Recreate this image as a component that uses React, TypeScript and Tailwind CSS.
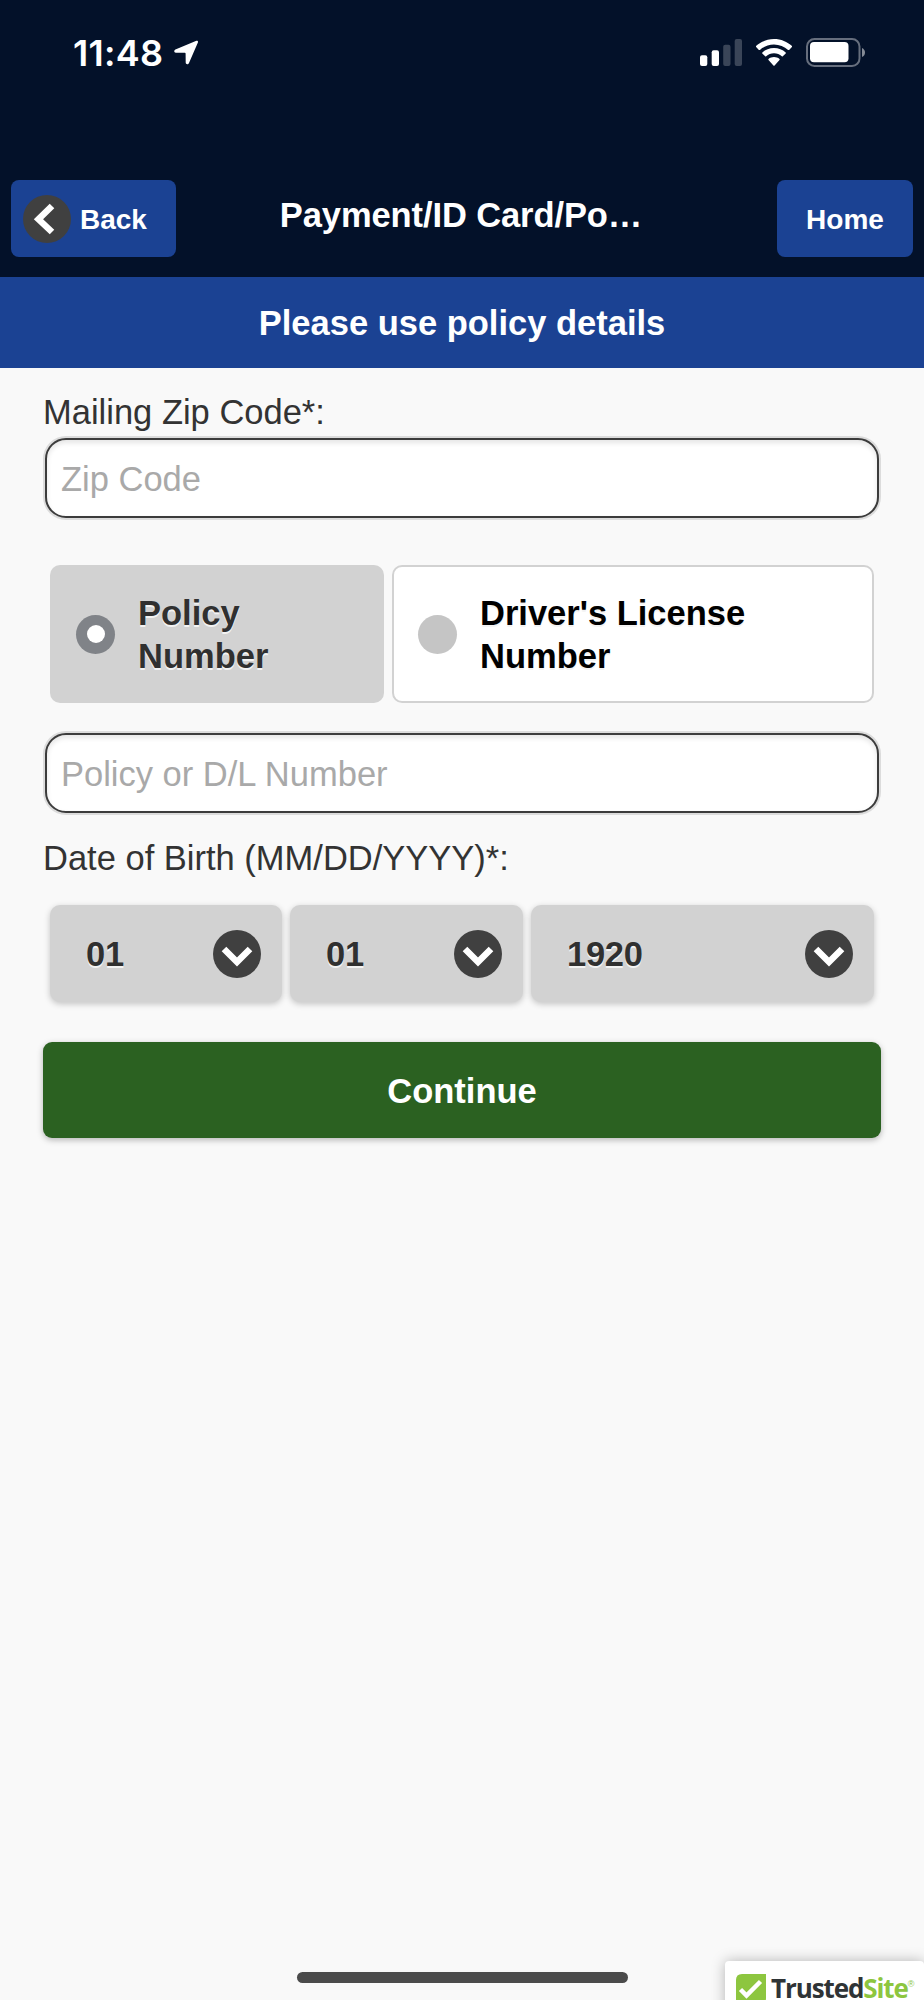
// src/App.tsx
import React from "react";

const birthFields = [
  { id: "month", value: "01", width: "w-[232px]" },
  { id: "day", value: "01", width: "w-[233px]" },
  { id: "year", value: "1920", width: "w-[343px]" },
];

const StatusBar: React.FC = () => (
  <div className="h-[180px] flex items-start justify-between pl-[73px] pr-[58px]">
    <div className="flex items-start pt-[31px]">
      <span className="font-[Inter,sans-serif] font-semibold text-[36px] leading-[44px] tracking-[0.3px] w-[100px] whitespace-nowrap">
        11:48
      </span>
      <svg className="mt-[9px] ml-px" width="25" height="25" viewBox="0 0 25 25" fill="#fff">
        <path d="M22.4.8 1.4 9.6C-.4 10.4 0 12.7 1.8 12.7L10.8 12.8Q11.6 12.8 11.6 13.6L11.7 22.5C11.7 24.5 14.2 24.9 15 23L23.9 2.4C24.4 1.2 23.4.4 22.4.8Z" />
      </svg>
    </div>
    <div className="flex items-start pt-[38px]">
      <svg width="42" height="28" viewBox="0 0 42 28" fill="#fff">
        <rect x="0" y="17.3" width="7.3" height="10.7" rx="2" />
        <rect x="11.7" y="12.3" width="7.3" height="15.7" rx="2" />
        <rect x="23.2" y="6.7" width="7.3" height="21.3" rx="2" opacity=".22" />
        <rect x="34.7" y="1" width="7.3" height="27" rx="2" opacity=".22" />
      </svg>
      <svg className="ml-[14px]" width="36" height="28" viewBox="0 0 36 28" fill="#fff">
        <path d="M18 1C11 1 4.700 3.700 0 8.100Q-.3 8.600.1 9.100L2.900 11.900Q3.400 12.300 3.900 11.900C7.600 8.500 12.600 6.400 18 6.400S28.400 8.500 32.100 11.900Q32.600 12.300 33.100 11.900L35.900 9.100Q36.300 8.600 36 8.100C31.300 3.700 25 1 18 1Z" />
        <path d="M18 10C13.500 10 9.400 11.700 6.300 14.500Q5.900 15 6.300 15.500L9.200 18.300Q9.700 18.700 10.200 18.300C12.300 16.400 15 15.300 18 15.300S23.700 16.400 25.800 18.300Q26.300 18.700 26.800 18.300L29.700 15.500Q30.100 15 29.700 14.500C26.600 11.700 22.500 10 18 10Z" />
        <path d="M18 19C16 19 14 19.700 12.500 20.900Q12 21.400 12.500 21.900L17.400 27.400Q18 28 18.600 27.400L23.500 21.900Q24 21.400 23.500 20.900C22 19.700 20 19 18 19Z" />
      </svg>
      <svg className="ml-[14px]" width="60" height="29" viewBox="0 0 60 29">
        <rect x="1" y="1" width="52.500" height="27" rx="7.500" fill="none" stroke="#666e7d" strokeWidth="2" />
        <rect x="4" y="4" width="38.500" height="20.300" rx="4" fill="#fff" />
        <path d="M56 10C58 11 59 12.500 59 14.500S58 18 56 19Z" fill="#858b96" />
      </svg>
    </div>
  </div>
);

const Chevron: React.FC<{ left?: boolean }> = ({ left }) => (
  <svg className="flex-shrink-0" width="48" height="48" viewBox="0 0 48 48">
    <circle cx="24" cy="24" r="24" fill="#404040" />
    <path
      d={left ? "M29 11 15.500 24.300 29 37" : "M11 19 24 32 37 19"}
      fill="none"
      stroke="#fff"
      strokeWidth="6.500"
    />
  </svg>
);

const TextField: React.FC<{ placeholder: string }> = ({ placeholder }) => (
  <input
    type="text"
    placeholder={placeholder}
    className="block w-[834px] h-[80px] rounded-[21px] border-2 border-[#3c3c3c] bg-white pt-[2px] pl-[14px] text-[34.5px] placeholder:text-[#a9a9a9] placeholder:opacity-100 shadow-[0_0_0_2px_#dcdcdc,inset_0_3px_5px_rgba(0,0,0,0.1)]"
  />
);

const App: React.FC = () => {
  return (
    <div className="w-[924px] h-[2000px] overflow-hidden flex flex-col bg-[#f9f9f9] font-['Liberation_Sans',sans-serif] text-[34.5px] text-[#333]">
      {/* Header */}
      <header className="h-[277px] flex-shrink-0 bg-[#031129] text-white">
        <StatusBar />
        <div className="flex items-start justify-between pl-[11px] pr-[11px]">
          <button className="w-[165px] h-[77px] rounded-lg bg-[#1b4293] flex items-center pl-[12px] text-[28px] font-bold">
            <Chevron left />
            <span className="ml-[9px] mt-[3px]">Back</span>
          </button>
          <h1 className="mt-[15px] mr-[31px] leading-10 font-bold whitespace-nowrap tracking-[-0.1px]">Payment/ID Card/Po…</h1>
          <button className="w-[136px] h-[77px] rounded-lg bg-[#1b4293] pt-[3px] text-[28px] font-bold">
            Home
          </button>
        </div>
      </header>

      <div className="h-[91px] flex-shrink-0 bg-[#1b4293] flex items-center justify-center pt-[2px] font-bold text-white">
        Please use policy details
      </div>

      {/* Policy form */}
      <main className="flex-1 pt-[24px] pl-[43px]">
        <label className="block h-[46px] leading-[40px]">Mailing Zip Code*:</label>
        <div className="pl-[2px]">
          <TextField placeholder="Zip Code" />
        </div>

        <div className="flex gap-[8px] mt-[47px] pl-[7px] font-bold leading-[43px]">
          <div className="w-[334px] h-[138px] rounded-[10px] bg-[#d2d2d2] flex items-center pl-[26px] text-[#303030] [text-shadow:0_2px_0_#f3f3f3]">
            <span className="w-[39px] h-[39px] rounded-full bg-[#808388] flex items-center justify-center">
              <span className="w-[18px] h-[18px] rounded-full bg-white" />
            </span>
            <span className="ml-[23px] pt-[2px] w-[180px]">Policy Number</span>
          </div>
          <div className="w-[482px] h-[138px] rounded-[10px] border-2 border-[#d2d2d2] bg-white flex items-center pl-[24px] text-black [text-shadow:0_2px_0_#f3f3f3]">
            <span className="w-[39px] h-[39px] rounded-full bg-[#c5c5c5]" />
            <span className="ml-[23px] pt-[2px] w-[300px]">Driver's License Number</span>
          </div>
        </div>

        <div className="mt-[30px] pl-[2px]">
          <TextField placeholder="Policy or D/L Number" />
        </div>

        <label className="block mt-[25px] h-[67px] leading-[40px]">Date of Birth (MM/DD/YYYY)*:</label>
        <div className="flex gap-[8px] pl-[7px]">
          {birthFields.map((field) => (
            <div
              key={field.id}
              className={`${field.width} h-[97px] rounded-[10px] bg-[#d2d2d2] flex items-center justify-between pl-[36px] pr-[21px] font-bold text-[#303030] shadow-[0_2px_6px_rgba(0,0,0,0.22)]`}
            >
              <span className="mt-[3px] tracking-[-0.3px] [text-shadow:0_2px_0_#f3f3f3]">{field.value}</span>
              <Chevron />
            </div>
          ))}
        </div>

        <button className="mt-[40px] w-[838px] h-[96px] rounded-[9px] bg-[#2b6121] pt-[4px] font-bold text-white shadow-[0_2px_6px_rgba(0,0,0,0.28)]">
          Continue
        </button>
      </main>

      {/* Home indicator and TrustedSite badge */}
      <footer className="h-[39px] flex-shrink-0 flex justify-between pl-[297px]">
        <div className="mt-[11px] w-[331px] h-[11px] rounded-full bg-[#4b4b4b]" />
        <div className="w-[199px] h-[60px] rounded-[4px] bg-white flex items-start pl-[11px] pt-[13px] shadow-[0_0_14px_rgba(0,0,0,0.28)]">
          <svg width="30" height="30" viewBox="0 0 30 30">
            <path d="M6 0H30V24Q30 30 24 30H0V6Q0 0 6 0Z" fill="#8dc63f" />
            <path d="m4.500 15.500 6 6L24.500 7.500" fill="none" stroke="#fff" strokeWidth="4.500" />
          </svg>
          <span className="ml-[5px] font-['Open_Sans',sans-serif] font-bold text-[26px] leading-[28px] tracking-[-1.1px] text-[#2f3436] whitespace-nowrap">
            Trusted<span className="text-[#8dc63f]">Site</span>
          </span>
          <span className="mt-[5px] text-[9px] leading-[10px] text-[#8dc63f]">®</span>
        </div>
      </footer>
    </div>
  );
};

export default App;
